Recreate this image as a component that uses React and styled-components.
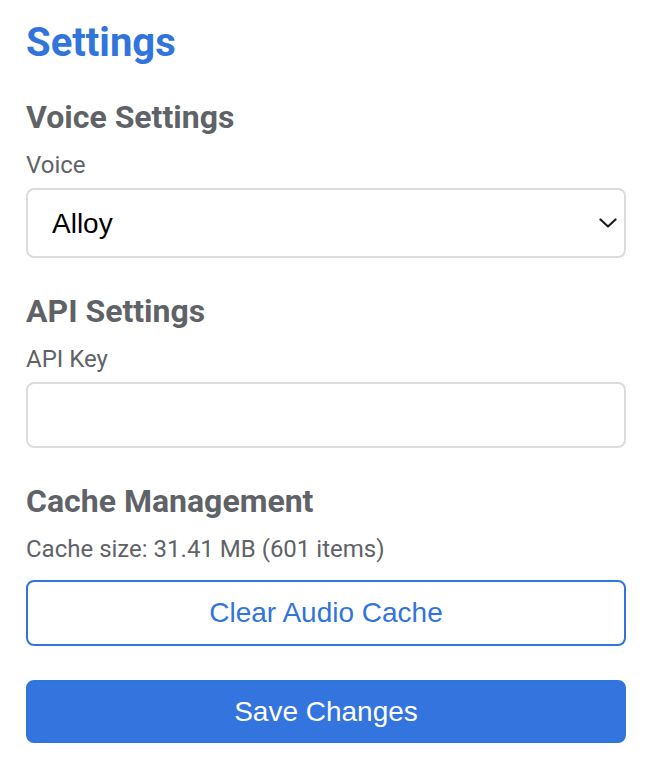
import styled, { createGlobalStyle } from 'styled-components'

const GlobalStyle = createGlobalStyle`
  html, body {
    margin: 0;
    padding: 0;
    background: #ffffff;
  }
  body {
    font-family: Roboto, "Liberation Sans", Arial, sans-serif;
  }
`

export default function App() {
  return (
    <Page>
      <GlobalStyle />
      <Title>Settings</Title>

      <Section>
        <Heading>Voice Settings</Heading>
        <Label htmlFor='voice'>Voice</Label>
        <SelectWrap>
          <Select id='voice' defaultValue='alloy'>
            <option value='alloy'>Alloy</option>
            <option value='echo'>Echo</option>
            <option value='fable'>Fable</option>
            <option value='onyx'>Onyx</option>
            <option value='nova'>Nova</option>
            <option value='shimmer'>Shimmer</option>
          </Select>
          <Chevron width='18' height='10' viewBox='0 0 18 10'>
            <path d='M1.5 1.5 L9 8.5 L16.5 1.5' fill='none' stroke='#1f1f1f' strokeWidth='2.2' strokeLinecap='round' strokeLinejoin='round' />
          </Chevron>
        </SelectWrap>
      </Section>

      <Section>
        <Heading>API Settings</Heading>
        <Label htmlFor='apikey'>API Key</Label>
        <Input id='apikey' type='password' />
      </Section>

      <Section>
        <Heading>Cache Management</Heading>
        <Info>Cache size: 31.41 MB (601 items)</Info>
        <Button $variant='outline'>Clear Audio Cache</Button>
      </Section>

      <Button $variant='primary' $height={63}>Save Changes</Button>
    </Page>
  )
}

const Page = styled.div`
  width: 600px;
  padding: 19px 30px 20px 26px;
`

const Title = styled.h1`
  margin: 0 0 31px;
  font-size: 40px;
  line-height: 48px;
  font-weight: 700;
  color: #3174dc;
`

const Section = styled.section`
  margin-bottom: 34px;
`

const Heading = styled.h2`
  margin: 0 0 15px;
  font-size: 32px;
  line-height: 38px;
  font-weight: 700;
  color: #5f6368;
`

const Label = styled.label`
  display: block;
  margin-bottom: 9px;
  font-size: 24px;
  line-height: 28px;
  color: #5f6368;
`

const Info = styled.p`
  margin: 0 0 17px;
  font-size: 24px;
  line-height: 28px;
  color: #5f6368;
`

const SelectWrap = styled.div`
  position: relative;
`

const Select = styled.select`
  appearance: none;
  display: block;
  width: 100%;
  height: 70px;
  padding: 0 50px 0 24px;
  border: 2px solid #dadce0;
  border-radius: 8px;
  background: #ffffff;
  font-family: "Liberation Sans", Arial, sans-serif;
  font-size: 28px;
  color: #000000;
  outline: none;
`

const Chevron = styled.svg`
  position: absolute;
  right: 9px;
  top: 30px;
  pointer-events: none;
`

const Input = styled.input`
  display: block;
  box-sizing: border-box;
  width: 100%;
  height: 66px;
  padding: 0 24px;
  border: 2px solid #dadce0;
  border-radius: 8px;
  font-family: "Liberation Sans", Arial, sans-serif;
  font-size: 28px;
  outline: none;
`

const Button = styled.button`
  display: block;
  width: 100%;
  height: ${(p) => p.$height || 66}px;
  border-radius: 8px;
  font-family: "Liberation Sans", Arial, sans-serif;
  font-size: 28px;
  cursor: pointer;
  border: 2px solid #3174dc;
  background: ${(p) => (p.$variant === 'primary' ? '#3374de' : '#ffffff')};
  color: ${(p) => (p.$variant === 'primary' ? '#ffffff' : '#3174dc')};
`
